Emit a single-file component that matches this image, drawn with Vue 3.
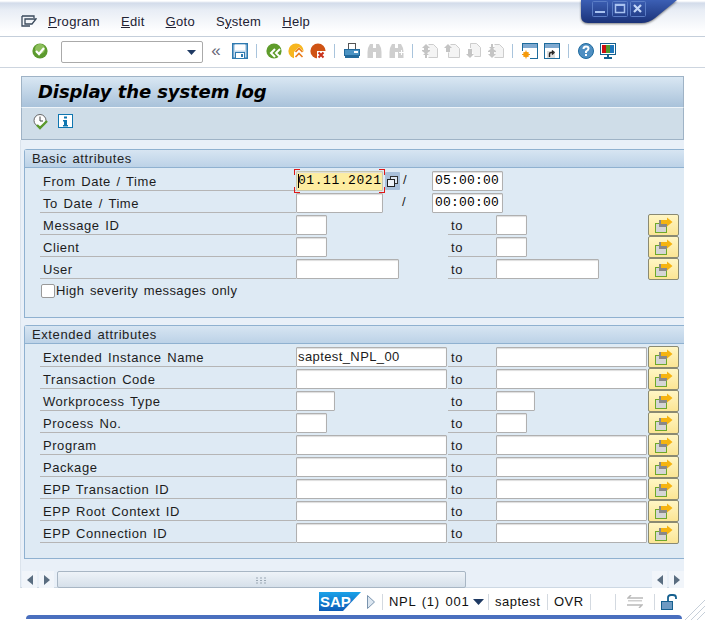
<script setup>
const basicRows = [
  { label: 'Message ID', from: 'w31', to: 'w31' },
  { label: 'Client', from: 'w31', to: 'w31' },
  { label: 'User', from: 'w103', to: 'w103' },
]
const extRows = [
  { label: 'Extended Instance Name', from: 'w151', to: 'w151', value: 'saptest_NPL_00' },
  { label: 'Transaction Code', from: 'w151', to: 'w151' },
  { label: 'Workprocess Type', from: 'w39', to: 'w39' },
  { label: 'Process No.', from: 'w31', to: 'w31' },
  { label: 'Program', from: 'w151', to: 'w151' },
  { label: 'Package', from: 'w151', to: 'w151' },
  { label: 'EPP Transaction ID', from: 'w151', to: 'w151' },
  { label: 'EPP Root Context ID', from: 'w151', to: 'w151' },
  { label: 'EPP Connection ID', from: 'w151', to: 'w151' },
]
</script>

<template>
  <div class="app">
    <div class="menubar">
      <svg class="menu-ico" width="16" height="14" viewBox="0 0 16 14"><path d="M1 2h12v2M1 2v10h8M4 5h11l-4 5H4z" fill="none" stroke="#3a4a5c" stroke-width="1.3"/></svg>
      <span class="menu"><u>P</u>rogram</span>
      <span class="menu"><u>E</u>dit</span>
      <span class="menu"><u>G</u>oto</span>
      <span class="menu">S<u>y</u>stem</span>
      <span class="menu"><u>H</u>elp</span>
    </div>

    <div class="winctl">
      <svg width="98" height="25" viewBox="0 0 98 25">
        <defs><linearGradient id="wg" x1="0" y1="0" x2="0" y2="1"><stop offset="0" stop-color="#3c5fb4"/><stop offset="1" stop-color="#1a3279"/></linearGradient></defs>
        <path d="M0 0H96L74 18Q68 23 60 23H7Q0 23 0 16Z" fill="url(#wg)"/>
        <g fill="none" stroke="#5b7dc6"><rect x="11.500" y="1.500" width="15" height="15" rx="1"/><rect x="31.500" y="1.500" width="15" height="15" rx="1"/><rect x="49.500" y="1.500" width="15" height="15" rx="1"/></g>
        <rect x="14" y="11" width="10" height="2" fill="#a9c2f0"/>
        <rect x="34.500" y="4.500" width="9" height="8" fill="none" stroke="#a9c2f0" stroke-width="1.500"/><rect x="34" y="4" width="10" height="2" fill="#a9c2f0"/>
        <path d="M53 5l7 7M60 5l-7 7" stroke="#c3d6f7" stroke-width="2.200"/>
      </svg>
    </div>

    <div class="toolbar">
      <span class="cell"><svg width="16" height="16" viewBox="0 0 16 16"><circle cx="8" cy="8" r="7.600" fill="#5c9a2e"/><circle cx="8" cy="6" r="5" fill="#8dbf5c"/><path d="M4 8l3 3 5-6" fill="none" stroke="#fff" stroke-width="2.200"/></svg></span>
      <div class="combo"><svg width="9" height="5" viewBox="0 0 9 5"><path d="M0 0h9L4.500 5z" fill="#1f3a63"/></svg></div>
      <span class="chev">«</span>
      <span class="cell"><svg width="16" height="16" viewBox="0 0 16 16"><rect x="0.750" y="0.750" width="14.500" height="14.500" fill="#c4d9ec" stroke="#2f7ab0" stroke-width="1.500"/><rect x="3" y="1.500" width="10" height="6" fill="#fff"/><rect x="3.500" y="9.500" width="9" height="6" fill="#fff" stroke="#2f7ab0"/><rect x="9" y="11" width="2" height="3" fill="#2f7ab0"/></svg></span>
      <span class="sep"></span>
      <span class="cell"><svg width="16" height="16" viewBox="0 0 16 16"><circle cx="8" cy="8" r="7.600" fill="#5f9c2b"/><path d="M9 6l-4 4 4 4M14 6l-4 4 4 4" fill="none" stroke="#fff" stroke-width="2"/></svg></span>
      <span class="cell"><svg width="16" height="16" viewBox="0 0 16 16"><circle cx="8" cy="8" r="7.600" fill="#f7b61f"/><path d="M6 9l5-5 5 5v7H6z" fill="#fff"/><path d="M7.500 9l3.500-3.500L14.500 9M7.500 14l3.500-3.500 3.500 3.500" fill="none" stroke="#ea7c1a" stroke-width="1.600"/></svg></span>
      <span class="cell"><svg width="16" height="16" viewBox="0 0 16 16"><circle cx="8" cy="8" r="7.600" fill="#cf5314"/><rect x="7" y="8" width="9" height="8" fill="#fff"/><path d="M8.500 9.500l5 5M13.500 9.500l-5 5" stroke="#c9301a" stroke-width="2"/></svg></span>
      <span class="sep"></span>
      <span class="cell"><svg width="16" height="16" viewBox="0 0 16 16"><rect x="4.500" y="0.500" width="7" height="6" fill="#fff" stroke="#555"/><rect x="0.500" y="6.500" width="15" height="6" fill="#4b93c3" stroke="#236a9c"/><rect x="10" y="8" width="4" height="2" fill="#fff"/><rect x="1" y="13" width="14" height="2" fill="#236a9c"/></svg></span>
      <span class="cell"><svg width="15" height="16" viewBox="0 0 15 16"><g fill="#cfcfcf"><path d="M1 5l2-4h3v14H0.500V9zM14 5l-2-4H9v14h5.500V9z"/><rect x="6" y="5" width="3" height="4"/></g></svg></span>
      <span class="cell"><svg width="15" height="16" viewBox="0 0 15 16"><g fill="#cfcfcf"><path d="M1 5l2-4h3v14H0.500V9zM14 5l-2-4H9v14h5.500V9z"/><rect x="6" y="5" width="3" height="4"/></g><path d="M10 9h2V7h1v2h2v1h-2v2h-1v-2h-2z" fill="#fff"/></svg></span>
      <span class="sep"></span>
      <span class="cell"><svg width="16" height="16" viewBox="0 0 16 16"><path d="M6.500 1.500h5l4 4v9h-9" fill="#f4f4f4" stroke="#cdcdcd"/><path d="M4 1l4 4H6v2h2v1L4 11 0 8V7h2V5H0z" fill="#c4c4c4"/><path d="M4 9l3 3H5v3H3v-3H1z" fill="#c4c4c4"/></svg></span>
      <span class="cell"><svg width="16" height="16" viewBox="0 0 16 16"><path d="M6.500 1.500h5l4 4v9h-11v-5" fill="#f4f4f4" stroke="#cdcdcd"/><path d="M4 1l4 4H6v4H2V5H0z" fill="#c4c4c4"/></svg></span>
      <span class="cell"><svg width="16" height="16" viewBox="0 0 16 16"><path d="M4.500 5V0.500h6l4 4v9h-6" fill="#f4f4f4" stroke="#cdcdcd"/><path d="M4 15l4-4H6V6H2v5H0z" fill="#c4c4c4"/></svg></span>
      <span class="cell"><svg width="16" height="16" viewBox="0 0 16 16"><path d="M6.500 1.500h5l4 4v9h-9" fill="#f4f4f4" stroke="#cdcdcd"/><path d="M4 15l4-4H6V9h2V8L4 5 0 8v1h2v2H0z" fill="#c4c4c4"/><path d="M4 7L1 4h2V1h2v3h2z" fill="#c4c4c4"/></svg></span>
      <span class="sep"></span>
      <span class="cell"><svg width="16" height="16" viewBox="0 0 16 16"><rect x="0.500" y="0.500" width="15" height="15" fill="#fff" stroke="#1d6b9c"/><rect x="1" y="1" width="14" height="4" fill="#7fa9d0"/><rect x="0" y="8" width="8" height="8" fill="#fff"/><circle cx="4" cy="11.500" r="2.800" fill="#f59a0c"/><path d="M4 7.500v8M0 11.500h8M1.500 9l5 5M6.500 9l-5 5" stroke="#f59a0c" stroke-width="1"/></svg></span>
      <span class="cell"><svg width="16" height="16" viewBox="0 0 16 16"><rect x="0.500" y="0.500" width="15" height="15" fill="#fff" stroke="#1d6b9c"/><rect x="1" y="1" width="14" height="4" fill="#7fa9d0"/><rect x="3" y="8" width="8" height="7" fill="#ddd"/><path d="M5.500 14v-3q0-1.500 2-1.500H9M8 7.500l2 2-2 2" fill="none" stroke="#222" stroke-width="1.400"/></svg></span>
      <span class="sep"></span>
      <span class="cell"><svg width="16" height="16" viewBox="0 0 16 16"><circle cx="8" cy="8" r="7.500" fill="#4f8fc2" stroke="#1e6a9e"/><path d="M5.500 6q0-2.500 2.500-2.500t2.500 2.200Q10.500 7 8 8.500V10" fill="none" stroke="#fff" stroke-width="2"/><rect x="7" y="11" width="2" height="2" fill="#fff"/></svg></span>
      <span class="cell"><svg width="16" height="16" viewBox="0 0 16 16"><rect x="0.500" y="0.500" width="15" height="11" fill="#fff" stroke="#14608e"/><rect x="2" y="2" width="4" height="8" fill="#cc0f0f"/><rect x="6" y="2" width="4" height="8" fill="#4f9a2e"/><rect x="10" y="2" width="4" height="8" fill="#1e77bd"/><rect x="7" y="12" width="2" height="2" fill="#14608e"/><rect x="4" y="14" width="8" height="2" fill="#14608e"/></svg></span>
    </div>

    <main class="main">
      <div class="title">Display the system log</div>
      <div class="apptool">
        <svg width="16" height="16" viewBox="0 0 16 16"><circle cx="7" cy="6.500" r="6" fill="#fff" stroke="#666"/><path d="M7 2.500v4.500h3" fill="none" stroke="#444"/><path d="M4 11l3 3 7-7" fill="none" stroke="#5b9a2c" stroke-width="2.400"/></svg>
        <svg width="15" height="14" viewBox="0 0 15 14"><rect x="0.500" y="0.500" width="14" height="13" fill="#fff" stroke="#0f76b0"/><rect x="6" y="2.500" width="3" height="2" fill="#0f76b0"/><path d="M5 6h4v5h1v1.500H5V11h1V7.500H5z" fill="#0f76b0"/></svg>
      </div>

      <div class="content">
        <section class="group basic">
          <h2 class="ghead">Basic attributes</h2>
          <div class="row">
            <span class="lbl">From Date / Time</span>
            <div class="focus">
              <span class="field date mono">01.11.2021</span>
              <i class="caret"></i><i class="cor tl"></i><i class="cor tr"></i><i class="cor bl"></i><i class="cor br"></i>
            </div>
            <span class="calbtn"><svg width="11" height="11" viewBox="0 0 11 11"><rect x="3.500" y="0.500" width="7" height="7" fill="#dfe8f2" stroke="#333"/><rect x="0.500" y="3.500" width="7" height="7" fill="#eef3f8" stroke="#222"/></svg></span>
            <span class="slash first">/</span>
            <span class="field time mono">05:00:00</span>
          </div>
          <div class="row">
            <span class="lbl">To Date / Time</span>
            <span class="field todate"></span>
            <span class="slash second">/</span>
            <span class="field time mono">00:00:00</span>
          </div>
          <div v-for="r in basicRows" :key="r.label" class="row">
            <span class="lbl">{{ r.label }}</span>
            <span class="fromcell"><span class="field" :class="r.from"></span></span>
            <span class="to">to</span>
            <span class="tocell"><span class="field" :class="r.to"></span></span>
            <button class="sel">
              <svg width="18" height="16" viewBox="0 0 18 16"><rect x="0.500" y="6.500" width="11" height="9" fill="#d5d5d5" stroke="#6fa82a"/><rect x="4" y="3" width="8" height="7" fill="#888"/><path d="M6 3h6V0.500L17.500 5 12 9.500V7H6z" fill="#f6b410"/></svg>
            </button>
          </div>
          <label class="check"><span class="box"></span>High severity messages only</label>
        </section>

        <section class="group ext">
          <h2 class="ghead">Extended attributes</h2>
          <div v-for="r in extRows" :key="r.label" class="row">
            <span class="lbl">{{ r.label }}</span>
            <span class="fromcell"><span class="field" :class="r.from">{{ r.value }}</span></span>
            <span class="to">to</span>
            <span class="tocell"><span class="field" :class="r.to"></span></span>
            <button class="sel">
              <svg width="18" height="16" viewBox="0 0 18 16"><rect x="0.500" y="6.500" width="11" height="9" fill="#d5d5d5" stroke="#6fa82a"/><rect x="4" y="3" width="8" height="7" fill="#888"/><path d="M6 3h6V0.500L17.500 5 12 9.500V7H6z" fill="#f6b410"/></svg>
            </button>
          </div>
        </section>

        <div class="scroll">
          <span class="arr"><svg width="6" height="10" viewBox="0 0 6 10"><path d="M6 0v10L0 5z" fill="#5a6d80"/></svg></span>
          <span class="arr"><svg width="6" height="10" viewBox="0 0 6 10"><path d="M0 0v10l6-5z" fill="#5a6d80"/></svg></span>
          <div class="thumb"><svg width="11" height="7" viewBox="0 0 11 7"><path d="M0 1h2M4 1h2M8 1h2M0 3.500h2M4 3.500h2M8 3.500h2M0 6h2M4 6h2M8 6h2" stroke="#9aa7b3"/></svg></div>
          <span class="track"></span>
          <span class="arr r"><svg width="6" height="10" viewBox="0 0 6 10"><path d="M6 0v10L0 5z" fill="#5a6d80"/></svg></span>
          <span class="arr r"><svg width="6" height="10" viewBox="0 0 6 10"><path d="M0 0v10l6-5z" fill="#5a6d80"/></svg></span>
        </div>
      </div>
    </main>

    <footer class="status">
      <svg class="logo" width="42" height="19" viewBox="0 0 42 19">
        <defs><linearGradient id="sap" x1="0" y1="0" x2="0" y2="1"><stop offset="0" stop-color="#1aa1e8"/><stop offset="1" stop-color="#0d5cb8"/></linearGradient></defs>
        <path d="M0 0H42L24 19H0z" fill="url(#sap)"/>
        <text x="1" y="15" class="saptxt">SAP</text>
      </svg>
      <svg class="play" width="8" height="14" viewBox="0 0 8 14"><path d="M0.500 0.500L7.500 7 0.500 13.500z" fill="#dce6f0" stroke="#7a94ae"/></svg>
      <span class="ssep"></span>
      <span class="stxt sys">NPL (1) 001</span>
      <svg class="drop" width="11" height="6" viewBox="0 0 11 6"><path d="M0 0h11L5.500 6z" fill="#1f3a63"/></svg>
      <span class="ssep"></span>
      <span class="stxt usr">saptest</span>
      <span class="ssep"></span>
      <span class="stxt ovr">OVR</span>
      <span class="ssep"></span>
      <span class="gap"></span>
      <span class="ssep"></span>
      <svg class="xfer" width="16" height="13" viewBox="0 0 16 13"><path d="M4 0L1 3h15M12 13l3-3H0" fill="none" stroke="#b9b9b9" stroke-width="1.500"/><rect x="1" y="5" width="14" height="1.500" fill="#cfcfcf"/></svg>
      <span class="ssep"></span>
      <svg class="lock" width="17" height="16" viewBox="0 0 17 16"><rect x="0.500" y="7.500" width="11" height="8" fill="#6e9ac2" stroke="#16608f"/><path d="M7 7V3.500Q7 1 10 1h2q3 0 3 2.500V5" fill="none" stroke="#16608f" stroke-width="1.800"/></svg>
    </footer>
    <div class="stripe"></div>
    <svg class="grip" width="20" height="20" viewBox="0 0 20 20"><path d="M0 20L20 0M6 20L20 6M12 20l8-8" stroke="#c6cfd9"/></svg>
  </div>
</template>

<style scoped>
.app { position: relative; width: 705px; height: 620px; overflow: hidden; background: #fff; font: 13px "Liberation Sans", Arial, sans-serif; letter-spacing: .55px; word-spacing: 1.5px; color: #1c1c1c; }
.menubar { display: flex; align-items: center; height: 37px; box-sizing: border-box; padding: 6px 0 0 21px; border-bottom: 1px solid #c5cfdb; background: linear-gradient(#fff 0, #fff 1px, #d3dcea 3px, #e8edf5 10px, #fff 32px); }
.menu-ico { margin-right: 11px; }
.menu { margin-right: 21px; color: #223; letter-spacing: .3px; }
.winctl { position: absolute; left: 581px; top: 0; filter: drop-shadow(0 1px 1px rgba(0,0,0,.5)); }
.toolbar { display: flex; align-items: center; height: 31px; box-sizing: border-box; padding: 0 0 2px 29px; border-bottom: 1px solid #cdd5df; }
.cell { display: flex; justify-content: center; width: 22px; flex: none; }
.combo { display: flex; align-items: center; justify-content: flex-end; width: 142px; height: 22px; box-sizing: border-box; margin: 2px 0 0 10px; padding-right: 6px; border: 1px solid #aaa; border-radius: 2px; background: #fff; flex: none; }
.chev { width: 26px; text-align: center; font-size: 17px; color: #667; letter-spacing: 0; flex: none; }
.sep { width: 12px; height: 14px; flex: none; position: relative; }
.sep::after { content: ""; position: absolute; left: 5px; top: 0; width: 1px; height: 14px; background: #a9c4dc; }
.main { width: 664px; margin: 8px 0 0 20px; }
.title { height: 31px; box-sizing: border-box; margin-left: 1px; padding: 1px 0 0 16px; border: 1px solid #9fb3c6; border-bottom: 0; background: linear-gradient(#d9e7f3, #a9c2da); font: italic bold 18px/28px "DejaVu Sans", sans-serif; letter-spacing: -.1px; word-spacing: 0; color: #000; }
.apptool { display: flex; align-items: flex-start; gap: 9px; height: 33px; box-sizing: border-box; margin-left: 1px; padding: 6px 0 0 11px; border: 1px solid #9fb3c6; border-top: 1px solid #eef4f9; background: #cfdde8; }
.content { height: 448px; box-sizing: border-box; padding: 9px 0 0 3px; background: #e9f0f8; border-left: 1px solid #dbe3ec; border-bottom: 1px solid #cdd8e3; }
.group { box-sizing: border-box; width: 660px; border: 1px solid #8fb1d0; border-right: 0; border-radius: 3px 0 0 0; background: #deeaf4; }
.basic { height: 169px; }
.ext { height: 234px; margin-top: 7px; }
.ghead { height: 18px; box-sizing: border-box; margin: 0 0 1px; padding-left: 7px; border-bottom: 1px solid #8fb1d0; background: linear-gradient(#d7e5f2, #bcd2e7); font: 13px/17px "Liberation Sans", Arial, sans-serif; letter-spacing: .6px; color: #222; }
.row { display: flex; align-items: flex-end; height: 22px; margin-left: 15px; }
.lbl { width: 256px; height: 22px; box-sizing: border-box; padding: 4px 0 0 3px; border-bottom: 1px solid #b5b5b5; line-height: 17px; flex: none; }
.field { display: block; height: 20px; box-sizing: border-box; padding-left: 1px; border: 1px solid #b0b0b0; border-radius: 1px; background: #fff; box-shadow: inset 0 1px 1px #ddd; line-height: 18px; letter-spacing: .4px; white-space: nowrap; }
.w31 { width: 31px; } .w39 { width: 39px; } .w103 { width: 103px; } .w151 { width: 151px; }
.fromcell, .tocell { flex: none; }
.fromcell { width: 152px; }
.tocell { width: 152px; }
.to { width: 48px; height: 22px; box-sizing: border-box; padding: 4px 0 0 3px; border-bottom: 1px solid #b5b5b5; line-height: 17px; flex: none; }
.mono { font-family: "Liberation Mono", monospace; font-size: 13px; letter-spacing: .55px; color: #000; }
.focus { position: relative; width: 87px; flex: none; }
.date { background: #fdeda0; border-color: #c8c8b0; }
.caret { position: absolute; left: 2px; top: 3px; width: 1px; height: 14px; background: #000; }
.cor { position: absolute; width: 5px; height: 5px; border: 0 solid #e01818; }
.tl { left: -2px; top: -2px; border-width: 1px 0 0 1px; }
.tr { right: -2px; top: -2px; border-width: 1px 1px 0 0; }
.bl { left: -2px; bottom: -2px; border-width: 0 0 1px 1px; }
.br { right: -2px; bottom: -2px; border-width: 0 1px 1px 0; }
.calbtn { display: flex; align-items: center; justify-content: center; width: 15px; height: 18px; margin: 0 0 1px 2px; background: #a9c0da; border-radius: 1px; flex: none; }
.slash { height: 20px; line-height: 18px; flex: none; }
.slash.first { width: 32px; padding-left: 3px; box-sizing: border-box; }
.slash.second { width: 49px; padding-left: 19px; box-sizing: border-box; }
.todate { width: 87px; flex: none; }
.time { width: 71px; padding-left: 2px; letter-spacing: .2px; flex: none; }
.sel { display: flex; align-items: center; justify-content: center; width: 31px; height: 22px; padding: 0; margin-bottom: -1px; border: 1px solid #8a8a72; border-radius: 2px; background: linear-gradient(#fff6c4, #fbe594); flex: none; }
.check { display: flex; align-items: center; height: 22px; margin-left: 16px; padding-top: 2px; box-sizing: border-box; line-height: 20px; letter-spacing: .42px; }
.box { width: 12px; height: 12px; margin-right: 1px; border: 1px solid #999; border-radius: 2px; background: #fff; }
.scroll { display: flex; align-items: stretch; height: 17px; margin: 12px 0 0 -2px; }
.arr { display: flex; align-items: center; justify-content: center; width: 15px; margin-right: 2px; background: #f1f5fa; flex: none; }
.arr.r { margin: 0 0 0 2px; }
.thumb { display: flex; align-items: flex-end; justify-content: center; width: 409px; box-sizing: border-box; margin-left: 1px; padding-bottom: 3px; border: 1px solid #a8b6c4; border-radius: 2px; background: linear-gradient(#eef3f8, #d6e0ea); flex: none; }
.track { flex: 1; }
.status { display: flex; align-items: center; height: 27px; box-sizing: border-box; padding-left: 319px; }
.logo { margin-right: 6px; }
.saptxt { font: bold 15px "Liberation Sans", Arial, sans-serif; letter-spacing: 0; fill: #fff; }
.play { margin-right: 7px; }
.ssep { width: 1px; height: 16px; background: #d3d9e0; flex: none; }
.stxt { letter-spacing: .5px; color: #111; white-space: nowrap; flex: none; }
.sys { margin: 0 9px 0 6px; letter-spacing: .7px; width: 75px; }
.drop { margin-right: 4px; }
.usr { margin: 0 6px; width: 46px; }
.ovr { margin: 0 6px; width: 30px; }
.gap { width: 24px; }
.xfer { margin: 0 11px; }
.lock { margin-left: 6px; }
.stripe { height: 4px; margin: 0 23px 0 26px; border-radius: 8px 8px 0 0; background: #4a6fbe; }
.grip { position: absolute; right: 0; bottom: 0; }
</style>

<style>
body { margin: 0; }
</style>
